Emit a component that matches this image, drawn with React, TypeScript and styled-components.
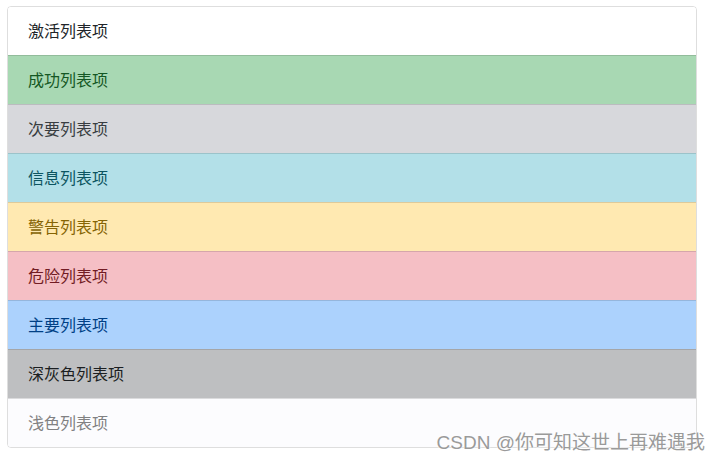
import React from "react";
import styled, { createGlobalStyle } from "styled-components";

const GlobalStyle = createGlobalStyle`
  html, body {
    margin: 0;
    padding: 0;
    background: #ffffff;
  }
  body {
    font-family: "Liberation Sans", "Noto Sans CJK SC", sans-serif;
  }
`;

type Variant =
  | "active"
  | "success"
  | "secondary"
  | "info"
  | "warning"
  | "danger"
  | "primary"
  | "dark"
  | "light";

const palette: Record<Variant, { bg: string; fg: string }> = {
  active: { bg: "#ffffff", fg: "#212529" },
  success: { bg: "#a8d8b3", fg: "#155724" },
  secondary: { bg: "#d7d8dc", fg: "#383d41" },
  info: { bg: "#b3e0e8", fg: "#0c5460" },
  warning: { bg: "#ffe9b1", fg: "#856404" },
  danger: { bg: "#f5bfc5", fg: "#721c24" },
  primary: { bg: "#acd2fd", fg: "#004085" },
  dark: { bg: "#bebfc1", fg: "#1b1e21" },
  light: { bg: "#fcfcfe", fg: "#818182" },
};

const Page = styled.div`
  position: relative;
  width: 720px;
  height: 463px;
  padding: 6px 23px 0 7px;
  box-sizing: border-box;
`;

const ListGroup = styled.ul`
  display: flex;
  flex-direction: column;
  margin: 0;
  padding: 0;
  list-style: none;
  border: 1px solid rgba(0, 0, 0, 0.13);
  border-radius: 4px;
  overflow: hidden;
`;

const ListItem = styled.li<{ $variant: Variant }>`
  padding: 11px 20px 13px;
  font-family: "Noto Sans CJK SC", sans-serif;
  font-size: 16px;
  line-height: 24px;
  background: ${(p) => palette[p.$variant].bg};
  color: ${(p) => palette[p.$variant].fg};
  & + & {
    border-top: 1px solid rgba(0, 0, 0, 0.13);
  }
`;

const Watermark = styled.div`
  position: absolute;
  right: 15px;
  bottom: 8px;
  font-family: "Liberation Sans", "Noto Sans CJK SC", sans-serif;
  font-size: 19px;
  line-height: 24px;
  color: #9a9a9a;
  white-space: nowrap;
  text-shadow: 0 0 2px #ffffff, 0 0 2px #ffffff;
`;

const items: { label: string; variant: Variant }[] = [
  { label: "激活列表项", variant: "active" },
  { label: "成功列表项", variant: "success" },
  { label: "次要列表项", variant: "secondary" },
  { label: "信息列表项", variant: "info" },
  { label: "警告列表项", variant: "warning" },
  { label: "危险列表项", variant: "danger" },
  { label: "主要列表项", variant: "primary" },
  { label: "深灰色列表项", variant: "dark" },
  { label: "浅色列表项", variant: "light" },
];

export default function App() {
  return (
    <>
      <GlobalStyle />
      <Page>
        <ListGroup>
          {items.map((it) => (
            <ListItem key={it.label} $variant={it.variant}>
              {it.label}
            </ListItem>
          ))}
        </ListGroup>
        <Watermark>CSDN @你可知这世上再难遇我</Watermark>
      </Page>
    </>
  );
}
